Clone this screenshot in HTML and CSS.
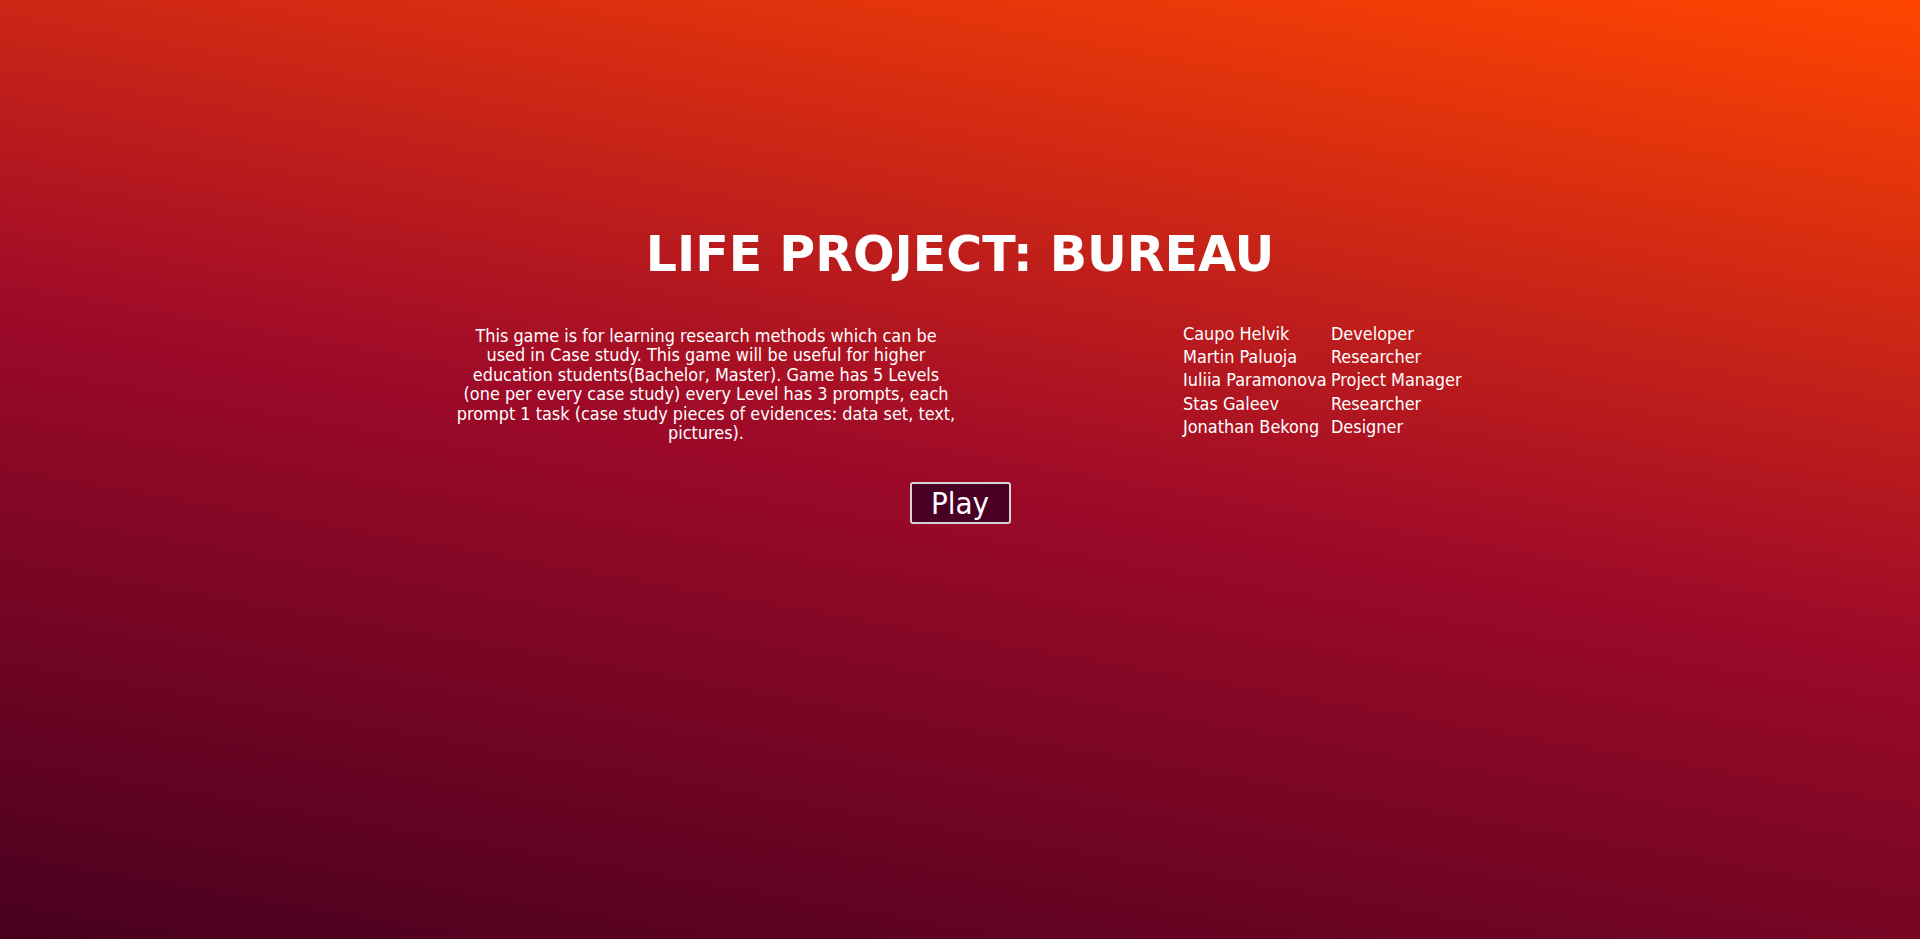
FILE: index.html
```html
<!DOCTYPE html>
<html lang="en">
<head>
<meta charset="utf-8">
<title>LIFE PROJECT: BUREAU</title>
<link rel="stylesheet" href="styles.css">
</head>
<body>
<main class="page">
  <h1 class="title">LIFE PROJECT: BUREAU</h1>
  <section class="info">
    <p class="desc">This game is for learning research methods which can be<br>used in Case study. This game will be useful for higher<br>education students(Bachelor, Master). Game has 5 Levels<br>(one per every case study) every Level has 3 prompts, each<br>prompt 1 task (case study pieces of evidences: data set, text,<br>pictures).</p>
    <table class="team">
      <tr><td>Caupo Helvik</td><td>Developer</td></tr>
      <tr><td>Martin Paluoja</td><td>Researcher</td></tr>
      <tr><td>Iuliia Paramonova</td><td>Project Manager</td></tr>
      <tr><td>Stas Galeev</td><td>Researcher</td></tr>
      <tr><td>Jonathan Bekong</td><td>Designer</td></tr>
    </table>
  </section>
  <div class="actions">
    <button class="play" type="button">Play</button>
  </div>
</main>
</body>
</html>
```
FILE: styles.css
```css
html, body {
  margin: 0;
  padding: 0;
}
body {
  min-height: 100vh;
  background: linear-gradient(10deg, #48001f 0%, #9e0a28 50%, #ff4500 100%);
  color: #ffffff;
  font-family: "DejaVu Sans Condensed", "DejaVu Sans", sans-serif;
}
.page {
  display: flex;
  flex-direction: column;
  align-items: center;
  padding-top: 225px;
}
.title {
  margin: 0;
  font-family: "DejaVu Sans", sans-serif;
  font-size: 49px;
  font-weight: bold;
  line-height: 60px;
}
.info {
  display: grid;
  grid-template-columns: 502px 285px;
  column-gap: 223px;
  justify-content: center;
  align-items: start;
  margin-top: 36px;
}
.desc {
  margin: 5px 0 0;
  font-size: 17.9px;
  line-height: 19.4px;
  text-align: center;
  white-space: nowrap;
}
.team {
  border-spacing: 2px;
  font-size: 17.9px;
  line-height: 19.2px;
}
.team td {
  padding: 1px;
  text-align: left;
  white-space: nowrap;
}
.actions {
  margin-top: 40px;
}
.play {
  width: 101px;
  height: 42px;
  padding: 0;
  background: #4a0024;
  color: #ffffff;
  border: 2px solid #d4d4d4;
  border-radius: 3px;
  font-family: "DejaVu Sans Condensed", "DejaVu Sans", sans-serif;
  font-size: 31px;
  line-height: 38px;
}
```
